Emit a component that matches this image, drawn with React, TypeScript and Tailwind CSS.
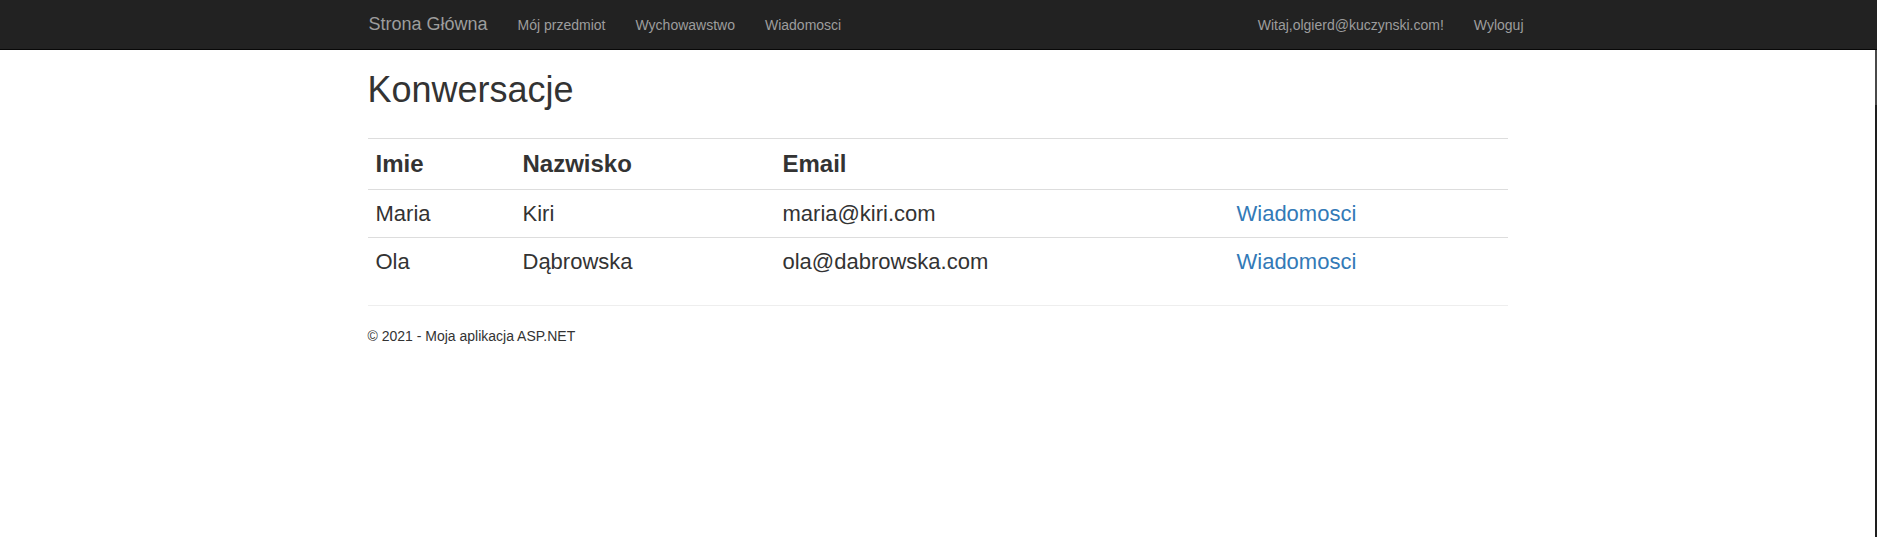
const navLinks = ["Mój przedmiot", "Wychowawstwo", "Wiadomosci"];

const rows = [
  { imie: "Maria", nazwisko: "Kiri", email: "maria@kiri.com" },
  { imie: "Ola", nazwisko: "Dąbrowska", email: "ola@dabrowska.com" },
];

export default function App() {
  return (
    <div className="flex flex-col h-[537px] bg-white text-[#333] font-['Liberation_Sans',Arial,Helvetica,sans-serif]">
      {/* Pasek nawigacji */}
      <div className="h-[50px] shrink-0 bg-[#222] border-b border-[#080808]">
        <div className="w-[1140px] mx-auto flex justify-between">
          <div className="flex">
            <span className="pt-[14px] pr-[15px] text-[18px] leading-[20px] text-[#9d9d9d]">Strona Główna</span>
            {navLinks.map((link) => (
              <a key={link} className="pt-[15px] px-[15px] text-[14px] leading-[20px] text-[#9d9d9d]">
                {link}
              </a>
            ))}
          </div>
          <div className="flex mr-[-30px]">
            <a className="pt-[15px] px-[15px] text-[14px] leading-[20px] text-[#9d9d9d]">Witaj,olgierd@kuczynski.com!</a>
            <a className="pt-[15px] px-[15px] text-[14px] leading-[20px] text-[#9d9d9d]">Wyloguj</a>
          </div>
        </div>
      </div>

      <div className="flex flex-1">
        <div className="flex-1">
          <div className="w-[1140px] mx-auto">
            <h2 className="mt-[20px] text-[36px] leading-[40px] font-normal">Konwersacje</h2>

            <table className="w-full mt-[28px] mb-[20px] table-fixed border-collapse">
              <colgroup>
                <col className="w-[147px]" />
                <col className="w-[260px]" />
                <col className="w-[454px]" />
                <col />
              </colgroup>
              <thead>
                <tr className="border-t border-[#ddd]">
                  <th className="p-[8px] text-left text-[24px] leading-[34px] font-bold">Imie</th>
                  <th className="p-[8px] text-left text-[24px] leading-[34px] font-bold">Nazwisko</th>
                  <th className="p-[8px] text-left text-[24px] leading-[34px] font-bold">Email</th>
                  <th className="p-[8px]"></th>
                </tr>
              </thead>
              <tbody>
                {rows.map((r) => (
                  <tr key={r.email} className="border-t border-[#ddd]">
                    <td className="p-[8px] text-[22px] leading-[31px]">{r.imie}</td>
                    <td className="p-[8px] text-[22px] leading-[31px]">{r.nazwisko}</td>
                    <td className="p-[8px] text-[22px] leading-[31px]">{r.email}</td>
                    <td className="p-[8px] text-[22px] leading-[31px]">
                      <a className="text-[#337ab7]">Wiadomosci</a>
                    </td>
                  </tr>
                ))}
              </tbody>
            </table>

            <hr className="border-0 border-t border-[#eee]" />
            <footer className="mt-[20px]">
              <p className="text-[14px] leading-[20px]">© 2021 - Moja aplikacja ASP.NET</p>
            </footer>
          </div>
        </div>
        {/* pasek przewijania */}
        <div className="w-[2px] bg-[#1e1e1e]">
          <div className="h-[55px] bg-[#4a4a4a]" />
        </div>
      </div>
    </div>
  );
}
